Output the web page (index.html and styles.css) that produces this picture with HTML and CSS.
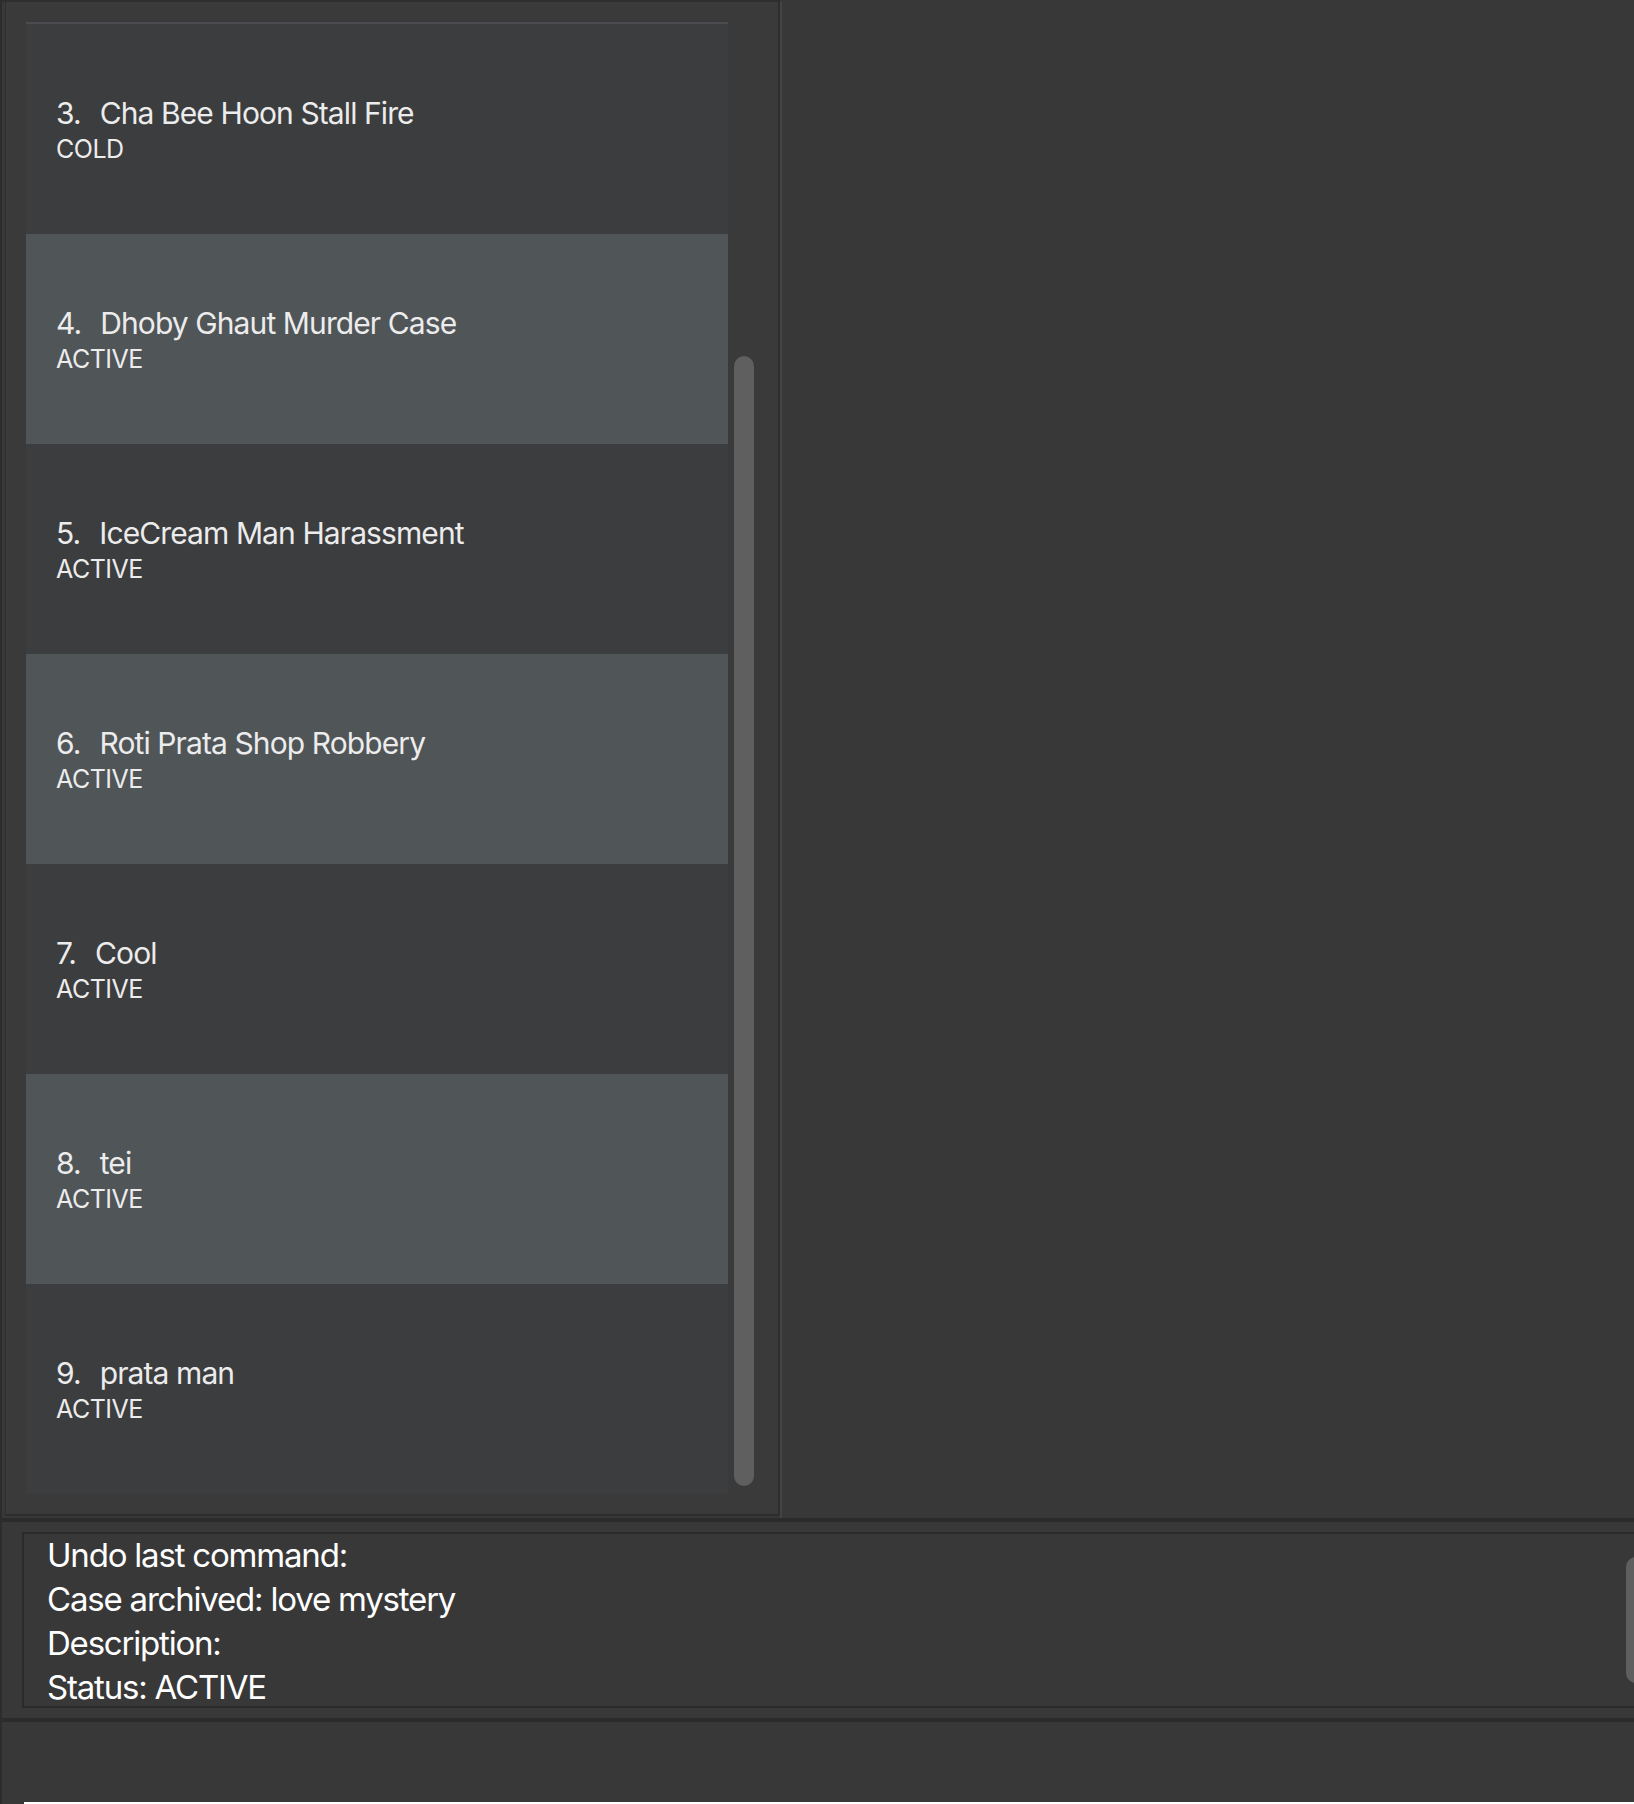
FILE: index.html
```html
<!DOCTYPE html>
<html lang="en">
<head>
<meta charset="utf-8">
<title>Case List</title>
<link rel="stylesheet" href="styles.css">
</head>
<body>
<div class="app">
  <div class="main">
    <div class="list-panel">
      <div class="list-inner">
        <div class="list-view">
          <div class="cards">
            <div class="card">
              <div class="title"><span class="idx">3.</span><span class="name">Cha Bee Hoon Stall Fire</span></div>
              <div class="status">COLD</div>
            </div>
            <div class="card alt">
              <div class="title"><span class="idx">4.</span><span class="name">Dhoby Ghaut Murder Case</span></div>
              <div class="status">ACTIVE</div>
            </div>
            <div class="card">
              <div class="title"><span class="idx">5.</span><span class="name">IceCream Man Harassment</span></div>
              <div class="status">ACTIVE</div>
            </div>
            <div class="card alt">
              <div class="title"><span class="idx">6.</span><span class="name">Roti Prata Shop Robbery</span></div>
              <div class="status">ACTIVE</div>
            </div>
            <div class="card">
              <div class="title"><span class="idx">7.</span><span class="name">Cool</span></div>
              <div class="status">ACTIVE</div>
            </div>
            <div class="card alt">
              <div class="title"><span class="idx">8.</span><span class="name">tei</span></div>
              <div class="status">ACTIVE</div>
            </div>
            <div class="card">
              <div class="title"><span class="idx">9.</span><span class="name">prata man</span></div>
              <div class="status">ACTIVE</div>
            </div>
          </div>
          <div class="vscroll"><div class="thumb"></div></div>
        </div>
      </div>
    </div>
    <div class="detail-panel"></div>
  </div>
  <div class="sep"></div>
  <div class="result-wrap">
    <div class="result-box">
      <div class="result-text">
        <div class="line">Undo last command:</div>
        <div class="line">Case archived: love mystery</div>
        <div class="line">Description:</div>
        <div class="line">Status: ACTIVE</div>
      </div>
      <div class="rscroll"><div class="rthumb"></div></div>
    </div>
  </div>
  <div class="sep"></div>
  <div class="command-area"><div class="command-box"></div></div>
</div>
</body>
</html>
```
FILE: styles.css
```css
html, body {
  margin: 0;
  padding: 0;
  background: #383838;
}
body {
  width: 1634px;
  height: 1804px;
  overflow: hidden;
  font-family: Inter, "Noto Sans", "Liberation Sans", sans-serif;
}
.app {
  width: 1632px;
  height: 1804px;
  border-left: 2px solid #2c2c2c;
  display: flex;
  flex-direction: column;
  overflow: hidden;
}
.main {
  height: 1518px;
  display: flex;
  flex: none;
}
.list-panel {
  width: 775px;
  flex: none;
  border-top: 2px solid #2e2e2e;
  border-right: 2px solid #444444;
  padding-left: 3px;
  padding-bottom: 2px;
  background: #383838;
  display: flex;
}
.list-inner {
  flex: 1;
  border-left: 1px solid #2f2f2f;
  border-right: 2px solid #2d2d2d;
  border-bottom: 2px solid #2d2d2d;
  background: #3a3a3a;
  padding: 20px 0 0 20px;
}
.list-view {
  display: flex;
  gap: 6px;
}
.cards {
  width: 702px;
  border-top: 2px solid #4b4c4f;
  display: flex;
  flex-direction: column;
}
.card {
  height: 210px;
  background: #3c3d3f;
  padding-left: 30px;
  display: flex;
  flex-direction: column;
  justify-content: center;
  color: #ececec;
}
.card.alt {
  background: #505558;
}
.title {
  display: flex;
  gap: 19px;
  font-size: 30px;
  line-height: 36px;
  letter-spacing: -0.9px;
}
.status {
  margin-top: 3px;
  font-size: 25px;
  line-height: 30px;
  letter-spacing: -0.5px;
}
.vscroll {
  width: 20px;
  padding-top: 334px;
}
.thumb {
  height: 1130px;
  border-radius: 10px;
  background: #5f5f5f;
}
.detail-panel {
  flex: 1;
  background: #383838;
}
.sep {
  height: 4px;
  flex: none;
  background: #2b2b2b;
}
.result-wrap {
  height: 196px;
  flex: none;
  padding: 10px 0 10px 20px;
  box-sizing: border-box;
}
.result-box {
  width: 1636px;
  height: 176px;
  box-sizing: border-box;
  border: 2px solid #2a2a2a;
  background: #383838;
  display: flex;
}
.result-text {
  flex: 1;
  padding-left: 23px;
  color: #ffffff;
  font-size: 33px;
  line-height: 44px;
  letter-spacing: -1.2px;
  margin-top: -1px;
}
.rscroll {
  width: 20px;
  margin-right: 10px;
  padding-top: 23px;
}
.rthumb {
  height: 126px;
  border-radius: 10px;
  background: #5f5f5f;
}
.command-area {
  flex: 1;
  padding: 80px 0 0 22px;
}
.command-box {
  height: 10px;
  border-top: 2px solid #ffffff;
  background: #383838;
}
```
